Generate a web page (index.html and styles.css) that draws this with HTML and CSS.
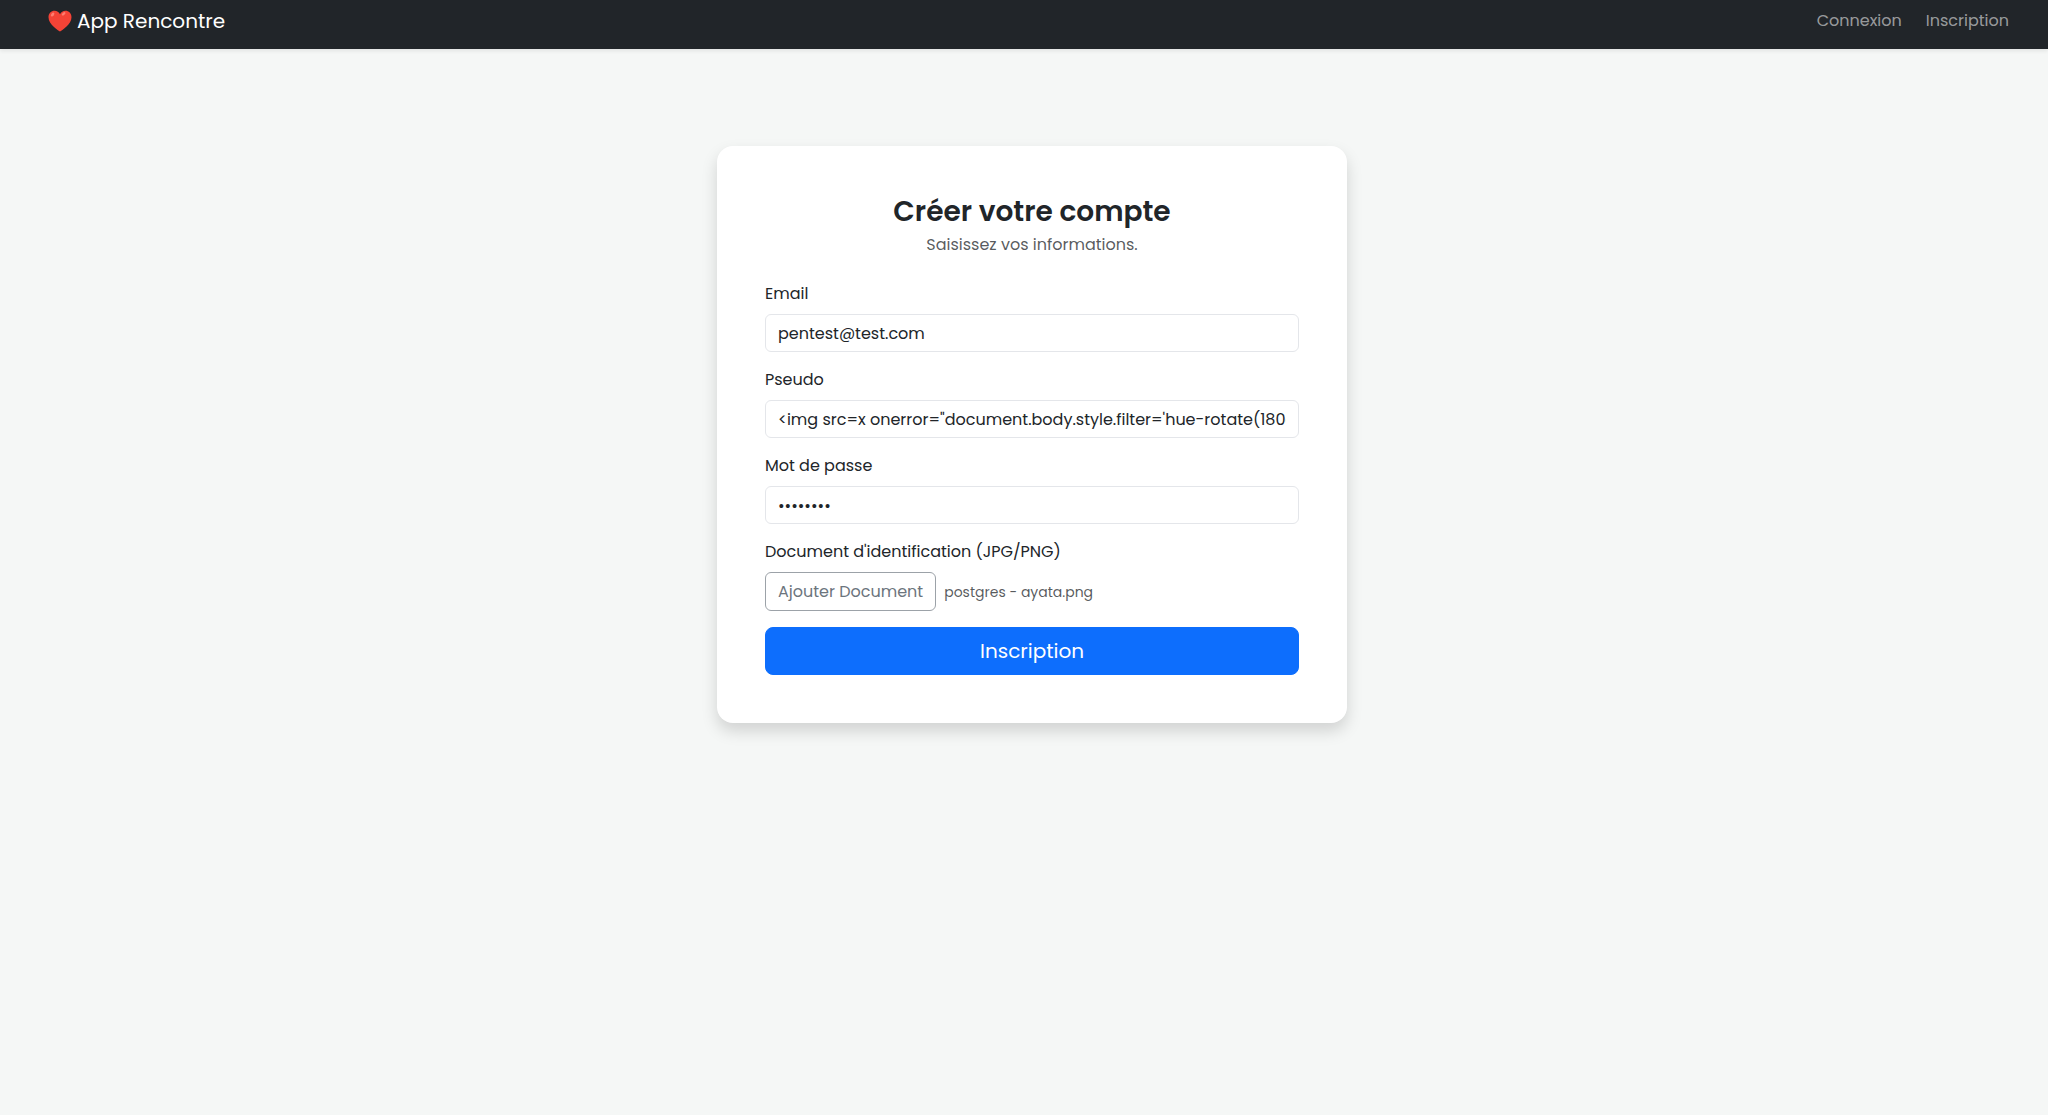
FILE: index.html
```html
<!DOCTYPE html>
<html lang="fr">
  <head>
    <meta charset="UTF-8" />
    <meta name="viewport" content="width=device-width, initial-scale=1" />
    <title>App Rencontre</title>
    <link rel="stylesheet" href="styles.css">
  </head>

  <body>
    <nav class="navbar">
      <a class="navbar-brand" href="/">
        <svg class="heart" viewBox="0 0 24 22" aria-hidden="true">
          <path fill="#f44336" d="M12 21.5C10.6 20.6 0.5 14.4 0.5 7.2C0.5 3.4 3.2 0.8 6.6 0.8C9 0.8 11 2 12 4.2C13 2 15 0.8 17.4 0.8C20.8 0.8 23.5 3.4 23.5 7.2C23.5 14.4 13.4 20.6 12 21.5Z" />
          <ellipse cx="4.6" cy="4.6" rx="1.4" ry="2.2" fill="#ff7d70" transform="rotate(38 4.6 4.6)" />
          <ellipse cx="15.6" cy="3.8" rx="1.2" ry="2.2" fill="#ff7d70" transform="rotate(50 15.6 3.8)" />
        </svg>
        App Rencontre
      </a>
      <div class="navbar-nav">
        <a class="nav-link" href="/login">Connexion</a>
        <a class="nav-link" href="/register">Inscription</a>
      </div>
    </nav>

    <main class="page">
      <div class="card">
        <h2 class="card-title">Créer votre compte</h2>
        <p class="card-subtitle">Saisissez vos informations.</p>
        <form method="post" enctype="multipart/form-data">
          <div class="form-group">
            <label for="email">Email</label>
            <input class="form-control" type="email" id="email" name="email" value="pentest@test.com" />
          </div>
          <div class="form-group">
            <label for="pseudo">Pseudo</label>
            <input class="form-control" type="text" id="pseudo" name="pseudo" value="&lt;img src=x onerror=&quot;document.body.style.filter='hue-rotate(180deg)'&quot;&gt;" />
          </div>
          <div class="form-group">
            <label for="password">Mot de passe</label>
            <input class="form-control" type="password" id="password" name="password" value="password" />
          </div>
          <div class="form-group">
            <label for="document">Document d'identification (JPG/PNG)</label>
            <input type="file" id="document" name="document" accept=".jpg,.jpeg,.png" hidden />
            <div class="file-row">
              <button class="btn-file" type="button" id="fileButton">Ajouter Document</button>
              <span class="file-name" id="fileName">postgres - ayata.png</span>
            </div>
          </div>
          <button class="btn-submit" type="submit">Inscription</button>
        </form>
      </div>
    </main>

    <script>
      var fileInput = document.getElementById("document");
      document
        .getElementById("fileButton")
        .addEventListener("click", function () {
          fileInput.click();
        });
      fileInput.addEventListener("change", function () {
        if (fileInput.files.length > 0) {
          document.getElementById("fileName").innerText = fileInput.files[0].name;
        }
      });
    </script>
  </body>
</html>
```

FILE: styles.css
```css
* {
  box-sizing: border-box;
}

body {
  margin: 0;
  font-family: "Poppins", "Inter", sans-serif;
  font-size: 16px;
  line-height: 24px;
  color: #212529;
  background-color: #f5f7f6;
}

.navbar {
  display: flex;
  justify-content: space-between;
  align-items: center;
  padding: 0 39px 7px 48px;
  background-color: #212529;
  box-shadow: 0 2px 4px rgba(0, 0, 0, 0.08);
}

.navbar-brand {
  display: flex;
  align-items: center;
  gap: 5px;
  font-size: 20px;
  line-height: 42px;
  color: #fff;
  text-decoration: none;
}

.heart {
  width: 24px;
  height: 22px;
}

.navbar-nav {
  display: flex;
  gap: 24px;
}

.nav-link {
  color: rgba(255, 255, 255, 0.55);
  text-decoration: none;
}

.nav-link:hover {
  color: rgba(255, 255, 255, 0.75);
}

.page {
  display: flex;
  justify-content: center;
  padding: 97px 0 48px 16px;
}

.card {
  width: 100%;
  max-width: 630px;
  padding: 48px;
  background-color: #fff;
  border-radius: 16px;
  box-shadow: 0 8px 16px rgba(0, 0, 0, 0.15);
}

.card-title {
  margin: 0 0 4px;
  font-size: 28px;
  font-weight: 600;
  line-height: 35px;
  text-align: center;
}

.card-subtitle {
  margin: 0 0 25px;
  color: rgba(33, 37, 41, 0.75);
  text-align: center;
}

.form-group {
  margin-bottom: 16px;
}

.form-group label {
  display: block;
  margin-bottom: 8px;
}

.form-control {
  display: block;
  width: 100%;
  height: 38px;
  padding: 6px 12px;
  border: 1px solid #e4e6ea;
  border-radius: 6px;
  font: inherit;
  color: inherit;
  background-color: #fff;
}

.form-control:focus {
  border-color: #86b7fe;
  outline: none;
}

.file-row {
  display: flex;
  align-items: center;
  gap: 8px;
}

.btn-file {
  height: 39px;
  padding: 6px 12px;
  border: 1px solid #9ca2a8;
  border-radius: 6px;
  font: inherit;
  color: #6c757d;
  background-color: #fff;
  cursor: pointer;
}

.file-name {
  font-size: 14px;
  color: rgba(33, 37, 41, 0.75);
}

.btn-submit {
  display: block;
  width: 100%;
  padding: 8px 16px;
  border: 1px solid #0d6efd;
  border-radius: 8px;
  font: inherit;
  font-size: 20px;
  line-height: 30px;
  color: #fff;
  background-color: #0d6efd;
  cursor: pointer;
}

.btn-submit:hover {
  background-color: #0b5ed7;
}
```
